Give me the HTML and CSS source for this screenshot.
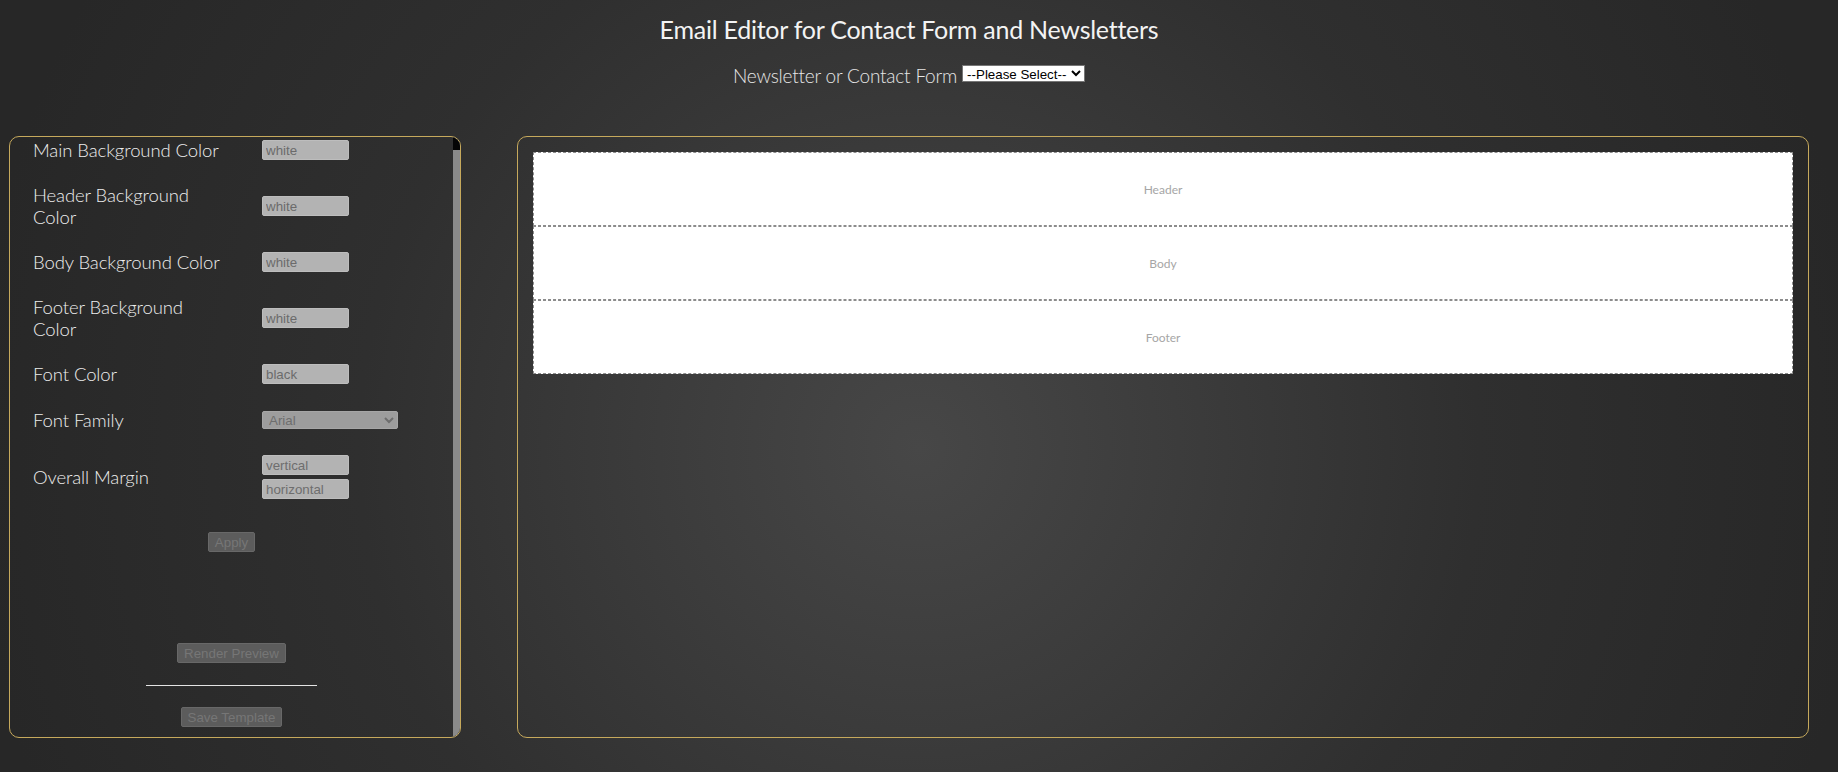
FILE: index.html
```html
<!DOCTYPE html>
<html lang="en">
<head>
<meta charset="utf-8">
<title>Email Editor</title>
<link rel="stylesheet" href="styles.css">
</head>
<body>
<div class="page">
  <header class="top">
    <h1 class="title">Email Editor for Contact Form and Newsletters</h1>
    <div class="picker">
      <label class="picker-label" for="type">Newsletter or Contact Form</label>
      <select id="type" class="type-select">
        <option>--Please Select--</option>
        <option>Newsletter</option>
        <option>Contact Form</option>
      </select>
    </div>
  </header>
  <main class="workspace">
    <aside class="controls">
      <div class="controls-body">
        <div class="fields">
          <label class="field-label" for="mainBg">Main Background Color</label>
          <input id="mainBg" class="text-input" value="white">

          <label class="field-label" for="headerBg">Header Background Color</label>
          <input id="headerBg" class="text-input" value="white">

          <label class="field-label" for="bodyBg">Body Background Color</label>
          <input id="bodyBg" class="text-input" value="white">

          <label class="field-label" for="footerBg">Footer Background Color</label>
          <input id="footerBg" class="text-input" value="white">

          <label class="field-label" for="fontColor">Font Color</label>
          <input id="fontColor" class="text-input" value="black">

          <label class="field-label nudge" for="fontFamily">Font Family</label>
          <select id="fontFamily" class="font-select nudge">
            <option>Arial</option>
            <option>Verdana</option>
            <option>Times New Roman</option>
          </select>

          <label class="field-label nudge" for="marginV">Overall Margin</label>
          <div class="margin-inputs nudge">
            <input id="marginV" class="text-input" placeholder="vertical">
            <input id="marginH" class="text-input" placeholder="horizontal">
          </div>
        </div>
        <div class="actions">
          <button class="btn">Apply</button>
          <button class="btn btn-render">Render Preview</button>
          <hr class="divider">
          <button class="btn btn-save">Save Template</button>
        </div>
      </div>
      <div class="scrollbar" aria-hidden="true">
        <div class="scrollbar-cap"></div>
      </div>
    </aside>
    <section class="preview-panel">
      <div class="preview">
        <div class="block">Header</div>
        <div class="block">Body</div>
        <div class="block">Footer</div>
      </div>
    </section>
  </main>
</div>
</body>
</html>
```
FILE: styles.css
```css
html {
  min-height: 100%;
  background: radial-gradient(circle at 50% 58%, #474747 0, #3c3c3c 260px, #2f2f2f 560px, #272727 950px);
  background-color: #272727;
}

body {
  margin: 0;
  font-family: Lato, "Open Sans", sans-serif;
  color: #ececec;
}

.page {
  width: 1818px;
  padding: 0 9px;
  box-sizing: border-box;
}

.top {
  text-align: center;
}

.title {
  margin: 0;
  padding-top: 14px;
  font-size: 25px;
  line-height: 30px;
  font-weight: 400;
  letter-spacing: -0.25px;
  color: #f3f3f3;
}

.picker {
  margin-top: 20px;
  font-size: 19px;
  line-height: 24px;
  font-weight: 300;
  letter-spacing: -0.2px;
  color: #e6e6e6;
}

.type-select {
  width: 123px;
  height: 17px;
  padding: 0;
  font: 13.33px "Liberation Sans", Arial, sans-serif;
  letter-spacing: 0;
  color: #000;
  background: #fff;
  border: 1px solid #767676;
  border-radius: 0;
  vertical-align: 4px;
}

.workspace {
  display: flex;
  gap: 56px;
  margin-top: 48px;
}

.controls {
  width: 452px;
  height: 602px;
  box-sizing: border-box;
  border: 1px solid #c6a95c;
  border-radius: 10px;
  overflow: hidden;
  display: flex;
}

.controls-body {
  flex: 1;
  display: flex;
  flex-direction: column;
}

.scrollbar {
  width: 7px;
  background: #8a8a8a;
  display: flex;
  flex-direction: column;
}

.scrollbar-cap {
  height: 13px;
  background: #050505;
}

.fields {
  display: grid;
  grid-template-columns: 195px max-content;
  column-gap: 34px;
  row-gap: 23px;
  align-items: center;
  padding: 2px 0 0 23px;
}

.fields > .nudge {
  margin-top: 1px;
}

.field-label {
  font-size: 18.5px;
  line-height: 22px;
  font-weight: 300;
  letter-spacing: -0.1px;
  color: #ededed;
}

.text-input {
  display: block;
  width: 87px;
  height: 20px;
  box-sizing: border-box;
  margin: 0;
  padding: 0 3px;
  font: 13.33px "Liberation Sans", Arial, sans-serif;
  color: #6b6b6b;
  background: #b3b3b3;
  border: 1px solid #bdbdbd;
  border-radius: 2px;
}

.text-input::placeholder {
  color: #6e6e6e;
}

.margin-inputs {
  display: flex;
  flex-direction: column;
  gap: 4px;
}

.font-select {
  width: 136px;
  height: 18px;
  padding: 0 2px;
  font: 13.33px "Liberation Sans", Arial, sans-serif;
  color: #6e6e6e;
  background: #9d9d9d;
  border: 1px solid #a6a6a6;
  border-radius: 2px;
}

.actions {
  display: flex;
  flex-direction: column;
  align-items: center;
  margin-top: 33px;
}

.btn {
  height: 20px;
  margin: 0;
  padding: 0 6px;
  font: 13.33px "Liberation Sans", Arial, sans-serif;
  color: #767676;
  background: #5c5c5c;
  border: 1px solid #686868;
  border-radius: 2px;
}

.btn-render {
  margin-top: 91px;
}

.divider {
  width: 171px;
  height: 1px;
  margin: 22px 0 0;
  border: 0;
  background: #e4e4e4;
}

.btn-save {
  margin-top: 21px;
}

.preview-panel {
  width: 1292px;
  height: 602px;
  box-sizing: border-box;
  border: 1px solid #c6a95c;
  border-radius: 10px;
  padding: 15px;
}

.block {
  height: 72px;
  display: flex;
  align-items: center;
  justify-content: center;
  background: #fff;
  border: 1px dashed #8c8c8c;
  font-size: 12px;
  color: #a6a6a6;
}
```
